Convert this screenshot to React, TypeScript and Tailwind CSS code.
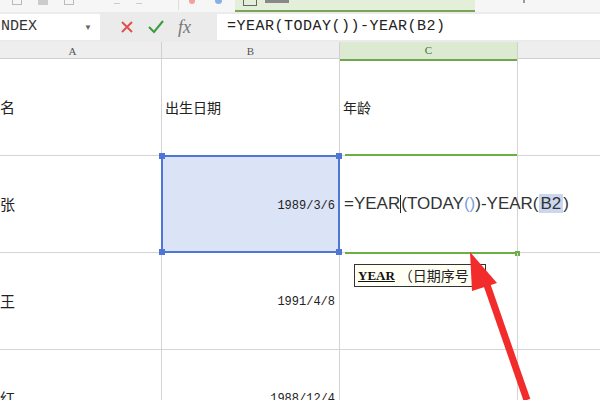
import React from "react";

const mono = { fontFamily: '"Liberation Mono", "Noto Sans CJK SC", monospace' };
const cjk = { fontFamily: '"Noto Sans CJK SC", "Noto Sans", sans-serif' };

const rows = [
  { name: "名", date: "", head: true },
  { name: "张", date: "1989/3/6", head: false },
  { name: "王", date: "1991/4/8", head: false },
  { name: "红", date: "1988/12/4", head: false },
];

const Arrow = () => (
  <svg
    className="absolute left-0 top-0 pointer-events-none"
    width="600"
    height="400"
    viewBox="0 0 600 400"
  >
    <path d="M486 282 L527 400" stroke="#f22b2b" strokeWidth="7" fill="none" />
    <path d="M470 252 L497 283 L472 291 Z" fill="#f22b2b" />
  </svg>
);

const App = () => {
  return (
    <div className="relative w-[600px] h-[400px] overflow-hidden bg-white">
      {/* top strip */}
      <div className="flex h-[12px] bg-[#f6f6f6] items-end">
        <div className="w-[185px] h-full flex items-start gap-4 pl-3">
          <div className="w-[10px] h-[5px] border border-[#bbb] border-t-0" />
          <div className="w-[10px] h-[5px] bg-[#ccc]" />
          <div className="w-[10px] h-[5px] border border-[#bbb] border-t-0" />
          <div className="w-[6px] h-[4px] border-b border-[#ccc] ml-6" />
          <div className="w-[6px] h-[4px] border-b border-[#ccc]" />
          <div className="w-px h-[10px] bg-[#ddd] ml-5" />
        </div>
        <div className="w-[50px] h-full flex items-start gap-5 pl-1">
          <div className="w-[6px] h-[4px] bg-[#f2a0a0] rounded-b" />
          <div className="w-[7px] h-[4px] bg-[#8aaee6] rounded-b" />
        </div>
        <div className="w-[240px] h-full bg-[#e3efd9] border-b-2 border-[#78a55a] flex items-start pl-2 gap-2">
          <div className="w-[14px] h-[6px] border border-[#666] border-t-0" />
          <div className="w-[24px] h-[3px] bg-[#888]" />
        </div>
        <div className="flex-1 h-full flex items-start pl-[48px]">
          <div className="w-[2px] h-[3px] bg-[#999]" />
        </div>
      </div>

      {/* formula bar */}
      <div className="flex h-[30px] bg-[#ebebeb] items-center">
        <div className="w-[100px] h-[26px] bg-white flex items-center justify-between pr-2 overflow-hidden">
          <span className="text-[15px] text-[#333] -ml-[8px]" style={mono}>
            INDEX
          </span>
          <span className="text-[8px] text-[#666]">▼</span>
        </div>
        <div className="w-[117px] flex items-center pl-[20px] gap-[14px]">
          <svg width="14" height="14" viewBox="0 0 14 14">
            <path d="M2 2 L12 12 M12 2 L2 12" stroke="#e05050" strokeWidth="2" />
          </svg>
          <svg width="16" height="14" viewBox="0 0 16 14">
            <path d="M1 7 L6 12 L15 1" stroke="#3c9a3c" strokeWidth="2" fill="none" />
          </svg>
          <span
            className="text-[18px] italic text-[#777]"
            style={{ fontFamily: '"Liberation Serif", serif' }}
          >
            fx
          </span>
        </div>
        <div className="flex-1 h-[26px] bg-white flex items-center pl-[10px]">
          <span className="text-[15px] text-[#222] tracking-[0.5px]" style={mono}>
            =YEAR(TODAY())-YEAR(B2)
          </span>
        </div>
      </div>

      {/* sheet */}
      <div className="-ml-[16px] w-[712px]">
        <div className="grid grid-cols-[178px_178px_178px_178px] h-[17px] bg-[#eeeeee] border-b border-[#d0d0d0]">
          {["A", "B", "C", ""].map((c, i) => (
            <div
              key={i}
              className={
                i === 2
                  ? "flex items-center justify-center text-[11px] text-[#3a7a2a] bg-[#dcead1] border-b-2 border-[#6fa64d] border-r border-r-[#d0d0d0]"
                  : "flex items-center justify-center text-[11px] text-[#555] border-r border-[#d0d0d0]"
              }
              style={{ fontFamily: '"Liberation Serif", serif' }}
            >
              {c}
            </div>
          ))}
        </div>

        {rows.map((r, i) => (
          <div
            key={i}
            className="grid grid-cols-[178px_178px_178px_178px] h-[97px] border-b border-[#d4d4d4]"
          >
            <div className="border-r border-[#d4d4d4] flex items-center pl-[16px] text-[15px] text-[#222]" style={cjk}>
              {r.name}
            </div>
            {i === 1 ? (
              <div className="relative bg-[#dbe3f6] border-2 border-[#4f75d6] -mt-px -mb-px -ml-px flex items-center justify-end pr-[3px] text-[12px] text-[#222]" style={mono}>
                <span className="mt-[4px]">{r.date}</span>
                <div className="absolute -left-[4px] -top-[4px] w-[6px] h-[6px] bg-[#4f75d6]" />
                <div className="absolute -left-[4px] -bottom-[4px] w-[6px] h-[6px] bg-[#4f75d6]" />
                <div className="absolute -right-[4px] -top-[4px] w-[6px] h-[6px] bg-[#4f75d6]" />
                <div className="absolute -right-[4px] -bottom-[4px] w-[6px] h-[6px] bg-[#4f75d6]" />
              </div>
            ) : (
              <div
                className={
                  r.head
                    ? "border-r border-[#d4d4d4] flex items-center pl-[3px] text-[14px] text-[#222]"
                    : "border-r border-[#d4d4d4] flex items-center justify-end pr-[4px] text-[12px] text-[#222]"
                }
                style={r.head ? cjk : mono}
              >
                {r.head ? "出生日期" : <span className="mt-[2px]">{r.date}</span>}
              </div>
            )}
            {i === 0 ? (
              <div className="border-r border-[#d4d4d4] flex items-center pl-[3px] text-[14px] text-[#222]" style={cjk}>
                年龄
              </div>
            ) : i === 1 ? (
              <div className="relative border-r border-[#d4d4d4] flex items-center pl-[4px] -mt-px">
                <div className="absolute left-[5px] right-0 -top-[1px] h-[2px] bg-[#6fae45]" />
                <div className="absolute left-[5px] right-0 -bottom-[2px] h-[2px] bg-[#6fae45]" />
                <div className="absolute -right-[3px] -bottom-[4px] w-[5px] h-[5px] bg-[#6fae45]" />
                <span
                  className="text-[17px] text-[#333] whitespace-nowrap"
                  style={{ fontFamily: '"Liberation Sans", sans-serif' }}
                >
                  =YEAR
                  <span className="inline-block w-px h-[18px] bg-[#222] align-middle" />
                  (TODAY<span className="text-[#7aa0dd]">()</span>)-YEAR(
                  <span className="bg-[#cbd7ef] px-[2px]">B2</span>)
                </span>
              </div>
            ) : i === 2 ? (
              <div className="relative border-r border-[#d4d4d4]">
                <div className="absolute left-[14px] top-[11px] h-[23px] w-[132px] border border-[#333] bg-[#fffff4] flex items-center pl-[3px] overflow-hidden">
                  <span
                    className="text-[13px] font-bold text-[#111] underline"
                    style={{ fontFamily: '"Liberation Serif", serif' }}
                  >
                    YEAR
                  </span>
                  <span className="text-[14px] text-[#222] ml-1 whitespace-nowrap" style={cjk}>
                    （日期序号
                  </span>
                </div>
              </div>
            ) : (
              <div className="border-r border-[#d4d4d4]" />
            )}
            <div />
          </div>
        ))}
      </div>

      <Arrow />
    </div>
  );
};

export default App;
